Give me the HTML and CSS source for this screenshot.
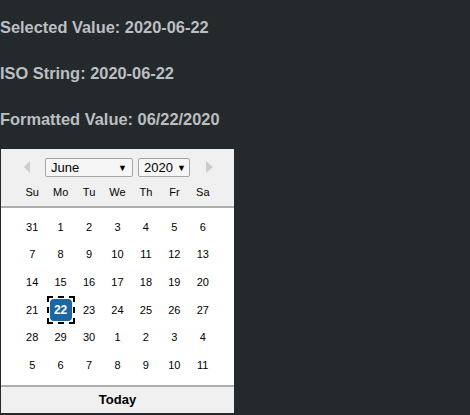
FILE: index.html
```html
<!DOCTYPE html>
<html>
<head>
<meta charset="utf-8">
<link rel="stylesheet" href="styles.css">
</head>
<body>
<div class="info">
  <div class="line">Selected Value: 2020-06-22</div>
  <div class="line">ISO String: 2020-06-22</div>
  <div class="line">Formatted Value: 06/22/2020</div>
</div>
<div class="cal">
  <div class="cal-head">
    <div class="nav">
      <span class="arrow left"></span>
      <div class="sel month"><span>June</span><span class="tri">▼</span></div>
      <div class="sel year"><span>2020</span><span class="tri">▼</span></div>
      <span class="arrow right"></span>
    </div>
    <div class="grid names">
      <span>Su</span><span>Mo</span><span>Tu</span><span>We</span><span>Th</span><span>Fr</span><span>Sa</span>
    </div>
  </div>
  <div class="cal-body grid">
    <span>31</span><span>1</span><span>2</span><span>3</span><span>4</span><span>5</span><span>6</span>
    <span>7</span><span>8</span><span>9</span><span>10</span><span>11</span><span>12</span><span>13</span>
    <span>14</span><span>15</span><span>16</span><span>17</span><span>18</span><span>19</span><span>20</span>
    <span>21</span><span><i class="focus"><b class="selected">22</b></i></span><span>23</span><span>24</span><span>25</span><span>26</span><span>27</span>
    <span>28</span><span>29</span><span>30</span><span>1</span><span>2</span><span>3</span><span>4</span>
    <span>5</span><span>6</span><span>7</span><span>8</span><span>9</span><span>10</span><span>11</span>
  </div>
  <div class="cal-foot">Today</div>
</div>
</body>
</html>
```

FILE: styles.css
```css
html, body {
  margin: 0;
  padding: 0;
  background: #24292c;
  height: 100%;
  overflow: hidden;
}
body {
  font-family: "Liberation Sans", Arial, sans-serif;
}
.info {
  padding-top: 17px;
  display: flex;
  flex-direction: column;
  gap: 25px;
}
.line {
  font-size: 16.4px;
  line-height: 21px;
  font-weight: bold;
  color: #bcbfc2;
}
.cal {
  margin-top: 19px;
  margin-left: 1px;
  width: 233px;
  background: #fff;
  color: #000;
}
.cal-head {
  background: #f0f0f0;
  border-bottom: 2px solid #aeaeae;
  padding: 9px 17px 6px;
  height: 42px;
}
.nav {
  position: relative;
  display: flex;
  justify-content: center;
  gap: 5px;
  height: 19px;
}
.sel {
  box-sizing: border-box;
  height: 19px;
  border: 1px solid #a6a6a6;
  border-radius: 2px;
  background: #f6f6f6;
  display: flex;
  align-items: center;
  justify-content: space-between;
  font-size: 13px;
  padding: 0 5px 0 5px;
}
.month { width: 88px; }
.year { width: 52px; padding-left: 5px; padding-right: 3px; }
.tri { font-size: 9px; }
.arrow {
  position: absolute;
  top: 3px;
  width: 0;
  height: 0;
  border-top: 6px solid transparent;
  border-bottom: 6px solid transparent;
}
.arrow.left {
  left: 6px;
  border-right: 6px solid #cccccc;
}
.arrow.right {
  right: 4px;
  border-left: 7px solid #cccccc;
}
.grid {
  display: grid;
  grid-template-columns: repeat(7, minmax(0, 1fr));
  font-size: 11px;
  text-align: center;
}
.names {
  margin-top: 7px;
  line-height: 16px;
}
.cal-body {
  padding: 5px 17px 6px;
  grid-auto-rows: 27.6px;
}
.cal-body span {
  display: flex;
  align-items: center;
  justify-content: center;
}
.focus {
  display: block;
  flex: none;
  border: 2px dashed #000;
  padding: 1px;
}
.selected {
  width: 22px;
  height: 22px;
  display: flex;
  align-items: center;
  justify-content: center;
  background: #1a67a4;
  color: #fff;
  border-radius: 4px;
  font-weight: bold;
  font-size: 12px;
  font-style: normal;
}
.cal-foot {
  background: #f0f0f0;
  border-top: 2px solid #aeaeae;
  height: 26px;
  line-height: 26px;
  text-align: center;
  font-weight: bold;
  font-size: 13px;
}
```
